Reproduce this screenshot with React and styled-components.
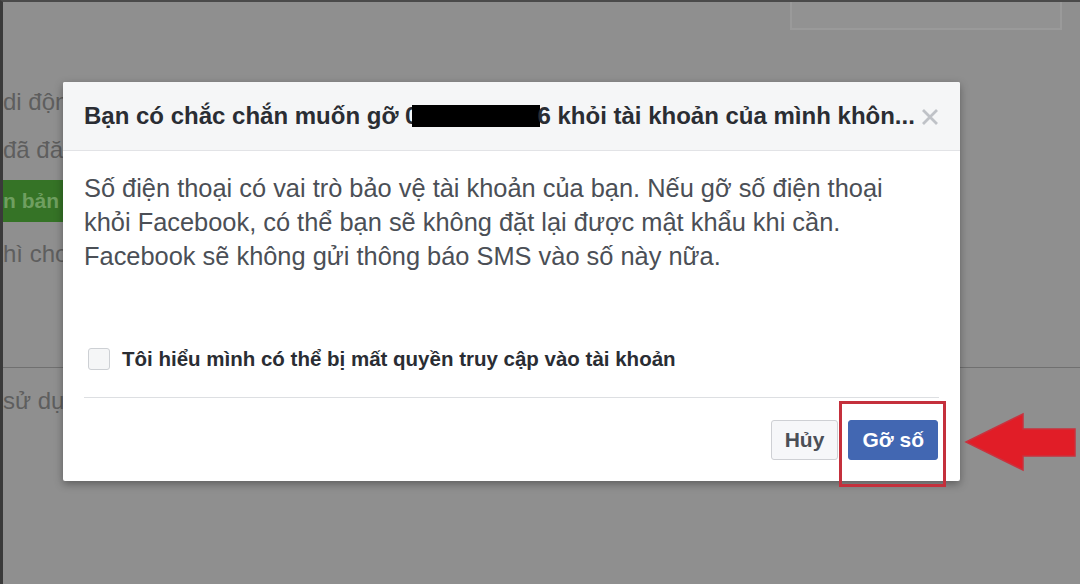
import React from "react";
import styled, { createGlobalStyle } from "styled-components";

const GlobalStyle = createGlobalStyle`
  html, body {
    margin: 0;
    padding: 0;
    background: #8f8f8f;
  }
  body {
    font-family: "Liberation Sans", Arial, sans-serif;
  }
`;

const Page = styled.div`
  position: relative;
  width: 1080px;
  height: 584px;
  overflow: hidden;
  background: #8f8f8f;
  border-top: 2px solid #4a4a4a;
  border-left: 3px solid #3a3a3a;
  box-sizing: border-box;
`;

const SearchBox = styled.div`
  position: absolute;
  top: -2px;
  right: 18px;
  width: 272px;
  height: 30px;
  border: 2px solid #9a9a9a;
  border-top: none;
  box-sizing: border-box;
  background: #929292;
`;

const BackColumn = styled.div`
  display: flex;
  flex-direction: column;
  padding-top: 76px;
`;

const BackText = styled.div`
  font-size: 24px;
  line-height: 48px;
  color: #5e5e5e;
  white-space: nowrap;
  margin-top: ${(p) => p.$gap || 0}px;
`;

const GreenButton = styled.div`
  margin: 6px 0 8px;
  width: 62px;
  height: 42px;
  background: #357326;
  color: #6f9f60;
  font-size: 21px;
  font-weight: bold;
  line-height: 42px;
  white-space: nowrap;
  overflow: hidden;
`;

const BackRule = styled.div`
  margin-top: 89px;
  height: 1px;
  background: #707070;
`;

const Dialog = styled.div`
  position: absolute;
  left: 60px;
  top: 80px;
  width: 897px;
  height: 399px;
  background: #fff;
  display: flex;
  flex-direction: column;
  box-shadow: 0 3px 8px rgba(0, 0, 0, 0.35);
  border-radius: 2px;
`;

const Header = styled.div`
  height: 69px;
  flex-shrink: 0;
  background: #f5f6f7;
  border-bottom: 1px solid #e2e3e6;
  border-radius: 2px 2px 0 0;
  display: flex;
  align-items: center;
  justify-content: space-between;
  padding: 0 21px 0 21px;
  box-sizing: border-box;
`;

const Title = styled.div`
  font-size: 24px;
  font-weight: bold;
  color: #2a2d33;
  white-space: nowrap;
  display: flex;
  align-items: center;
`;

const Redacted = styled.span`
  display: inline-block;
  width: 128px;
  height: 22px;
  background: #000;
  margin: 0 -3px 0 -6px;
`;

const Close = styled.svg`
  flex-shrink: 0;
  margin-top: 2px;
`;

const Body = styled.div`
  flex: 1;
  padding: 20px 21px 0;
  display: flex;
  flex-direction: column;
`;

const Message = styled.p`
  margin: 0;
  font-size: 25.4px;
  line-height: 34px;
  color: #4b4f56;
  white-space: nowrap;
`;

const CheckRow = styled.label`
  margin-top: 74px;
  display: flex;
  align-items: center;
  gap: 12px;
  padding-left: 4px;
`;

const Box = styled.span`
  width: 20px;
  height: 20px;
  border: 1px solid #cdd0d4;
  border-radius: 3px;
  background: #f5f6f7;
`;

const CheckLabel = styled.span`
  font-size: 20.5px;
  font-weight: bold;
  color: #2a2d33;
`;

const Divider = styled.div`
  margin-top: 26px;
  height: 1px;
  background: #dddfe2;
`;

const Footer = styled.div`
  display: flex;
  justify-content: flex-end;
  gap: 10px;
  padding: 21px 22px 21px 0;
`;

const Button = styled.button`
  position: relative;
  height: 40px;
  padding: 0 13px;
  font-family: inherit;
  font-size: 21px;
  font-weight: bold;
  border-radius: 3px;
  border: 1px solid ${(p) => (p.$primary ? "#4267b2" : "#ced0d4")};
  background: ${(p) => (p.$primary ? "#4267b2" : "#f6f7f9")};
  color: ${(p) => (p.$primary ? "#fff" : "#4b4f56")};
`;

const Highlight = styled.span`
  position: absolute;
  left: -10px;
  top: -20px;
  width: 107px;
  height: 86px;
  border: 3px solid #c4303c;
  box-sizing: border-box;
  pointer-events: none;
`;

const Arrow = styled.svg`
  position: absolute;
  left: 960px;
  top: 408px;
`;

export default function App() {
  return (
    <Page>
      <GlobalStyle />
      <SearchBox />
      <BackColumn>
        <BackText>di động</BackText>
        <BackText>đã đăng</BackText>
        <GreenButton>n bản</GreenButton>
        <BackText>hì cho</BackText>
        <BackRule />
        <BackText $gap={9}>sử dụng</BackText>
      </BackColumn>

      <Dialog>
        <Header>
          <Title>
            Bạn có chắc chắn muốn gỡ 0<Redacted />6 khỏi tài khoản của mình khôn...
          </Title>
          <Close width="18" height="18" viewBox="0 0 18 18">
            <path d="M2 2 L16 16 M16 2 L2 16" stroke="#bfc2c7" strokeWidth="2.8" />
          </Close>
        </Header>
        <Body>
          <Message>
            Số điện thoại có vai trò bảo vệ tài khoản của bạn. Nếu gỡ số điện thoại
            <br />
            khỏi Facebook, có thể bạn sẽ không đặt lại được mật khẩu khi cần.
            <br />
            Facebook sẽ không gửi thông báo SMS vào số này nữa.
          </Message>
          <CheckRow>
            <Box />
            <CheckLabel>Tôi hiểu mình có thể bị mất quyền truy cập vào tài khoản</CheckLabel>
          </CheckRow>
          <Divider />
        </Body>
        <Footer>
          <Button>Hủy</Button>
          <Button $primary>
            Gỡ số
            <Highlight />
          </Button>
        </Footer>
      </Dialog>

      <Arrow width="116" height="64" viewBox="0 0 116 64">
        <polygon
          points="3,32 60,4 60,19 112,19 112,46 60,46 60,60"
          fill="#e11d27"
          stroke="#c9323e"
          strokeWidth="1.5"
        />
      </Arrow>
    </Page>
  );
}
